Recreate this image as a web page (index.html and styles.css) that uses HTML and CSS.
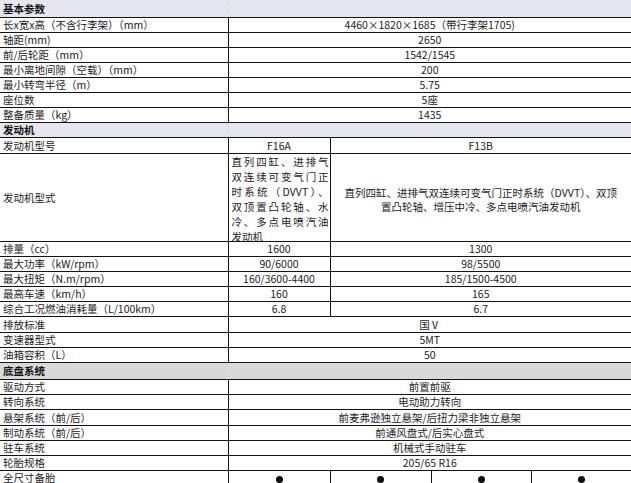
FILE: index.html
```html
<!DOCTYPE html>
<html lang="zh-CN">
<head>
<meta charset="utf-8">
<title>参数配置</title>
<link rel="stylesheet" href="styles.css">
</head>
<body>
<table class="spec">
  <colgroup>
    <col class="c-label">
    <col class="c-a">
    <col class="c-b">
    <col class="c-c">
    <col class="c-d">
  </colgroup>
  <tbody>
    <tr class="sec sec-first"><th class="sec-l">基本参数</th><th class="sec-r" colspan="4"></th></tr>
    <tr><td class="lbl">长x宽x高（不含行李架）（mm）</td><td class="val" colspan="4">4460×1820×1685（带行李架1705)</td></tr>
    <tr><td class="lbl">轴距(mm)</td><td class="val" colspan="4">2650</td></tr>
    <tr><td class="lbl">前/后轮距（mm）</td><td class="val" colspan="4">1542/1545</td></tr>
    <tr><td class="lbl">最小离地间隙（空载）（mm）</td><td class="val" colspan="4">200</td></tr>
    <tr><td class="lbl">最小转弯半径（m）</td><td class="val" colspan="4">5.75</td></tr>
    <tr><td class="lbl">座位数</td><td class="val" colspan="4">5座</td></tr>
    <tr><td class="lbl">整备质量（kg）</td><td class="val" colspan="4">1435</td></tr>

    <tr class="sec sec-blue"><th class="sec-l">发动机</th><th class="sec-r" colspan="4"></th></tr>
    <tr class="r16"><td class="lbl">发动机型号</td><td class="val">F16A</td><td class="val" colspan="3">F13B</td></tr>
    <tr class="tall">
      <td class="lbl">发动机型式</td>
      <td class="dist-cell"><div class="dist">
        <span class="dl">直列四缸、进排气</span>
        <span class="dl">双连续可变气门正</span>
        <span class="dl">时系统（DVVT）、</span>
        <span class="dl">双顶置凸轮轴、水</span>
        <span class="dl">冷、多点电喷汽油</span>
        <span class="dl dl-last">发动机</span>
      </div></td>
      <td class="val desc" colspan="3"><div class="desc-in">直列四缸、进排气双连续可变气门正时系统（DVVT）、双顶<br>置凸轮轴、增压中冷、多点电喷汽油发动机</div></td>
    </tr>
    <tr><td class="lbl">排量（cc）</td><td class="val">1600</td><td class="val" colspan="3">1300</td></tr>
    <tr><td class="lbl">最大功率（kW/rpm）</td><td class="val">90/6000</td><td class="val" colspan="3">98/5500</td></tr>
    <tr><td class="lbl">最大扭矩（N.m/rpm）</td><td class="val">160/3600-4400</td><td class="val" colspan="3">185/1500-4500</td></tr>
    <tr><td class="lbl">最高车速（km/h）</td><td class="val">160</td><td class="val" colspan="3">165</td></tr>
    <tr><td class="lbl">综合工况燃油消耗量（L/100km）</td><td class="val">6.8</td><td class="val" colspan="3">6.7</td></tr>
    <tr class="r16"><td class="lbl">排放标准</td><td class="val" colspan="4">国Ⅴ</td></tr>
    <tr><td class="lbl">变速器型式</td><td class="val" colspan="4">5MT</td></tr>
    <tr><td class="lbl">油箱容积（L）</td><td class="val" colspan="4">50</td></tr>

    <tr class="sec sec-gray"><th class="sec-l">底盘系统</th><th class="sec-r" colspan="4"></th></tr>
    <tr><td class="lbl">驱动方式</td><td class="val" colspan="4">前置前驱</td></tr>
    <tr><td class="lbl">转向系统</td><td class="val" colspan="4">电动助力转向</td></tr>
    <tr class="r16"><td class="lbl">悬架系统（前/后）</td><td class="val" colspan="4">前麦弗逊独立悬架/后扭力梁非独立悬架</td></tr>
    <tr><td class="lbl">制动系统（前/后）</td><td class="val" colspan="4">前通风盘式/后实心盘式</td></tr>
    <tr><td class="lbl">驻车系统</td><td class="val" colspan="4">机械式手动驻车</td></tr>
    <tr><td class="lbl">轮胎规格</td><td class="val" colspan="4">205/65 R16</td></tr>
    <tr><td class="lbl">全尺寸备胎</td><td class="val"><span class="dot"></span></td><td class="val"><span class="dot"></span></td><td class="val"><span class="dot"></span></td><td class="val"><span class="dot"></span></td></tr>
  </tbody>
</table>
</body>
</html>
```

FILE: styles.css
```css
html, body {
  margin: 0;
  padding: 0;
  background: #ffffff;
  overflow: hidden;
}

body {
  width: 631px;
  height: 483px;
  font-family: "Noto Sans CJK SC", "Noto Sans", sans-serif;
  font-size: 10.5px;
  color: #1c1c1c;
}

.spec {
  border-collapse: collapse;
  table-layout: fixed;
  width: 631px;
}

.c-label { width: 228px; }
.c-a { width: 102px; }
.c-b { width: 101px; }
.c-c { width: 100px; }
.c-d { width: 100px; }

.spec td,
.spec th {
  height: 14px;
  padding: 0 3px;
  line-height: 14px;
  border: 1px solid #141414;
  white-space: nowrap;
  overflow: hidden;
  vertical-align: middle;
}

.spec .r16 td { height: 15px; }

.spec tr > :first-child { border-left: none; }
.spec tr > :last-child { border-right: none; }

.lbl { text-align: left; }
.spec .val { text-align: center; padding: 0; }

/* section bands */
.sec th {
  text-align: left;
  font-weight: 700;
  color: #111;
}
.sec .sec-l { border-right: 1px dotted #c4c4cc; }
.sec .sec-r { border-left: 1px dotted #c4c4cc; }
.spec .sec-first th { border-top: none; height: 17px; background: #e6e6ee; }
.sec-blue th { background: #e6e6ee; }
.spec .sec-gray th { background: #d9d9d9; height: 16px; }

/* engine type row */
.spec .tall td { height: 87px; }
.spec .dist-cell {
  padding: 0 1px 0 3px;
  vertical-align: top;
  white-space: normal;
}
.dist {
  height: 87px;
  overflow: hidden;
  line-height: 15px;
}
.dl {
  display: block;
  text-align: justify;
  text-align-last: justify;
  white-space: normal;
}
.dl-last { text-align-last: left; text-align: left; }

.spec .desc {
  white-space: normal;
  padding: 0 4px;
}
.desc-in {
  line-height: 13.5px;
  margin-top: 4px;
}

.dot {
  display: inline-block;
  width: 7px;
  height: 7px;
  border-radius: 50%;
  background: #0d0d0d;
  vertical-align: middle;
}
```
